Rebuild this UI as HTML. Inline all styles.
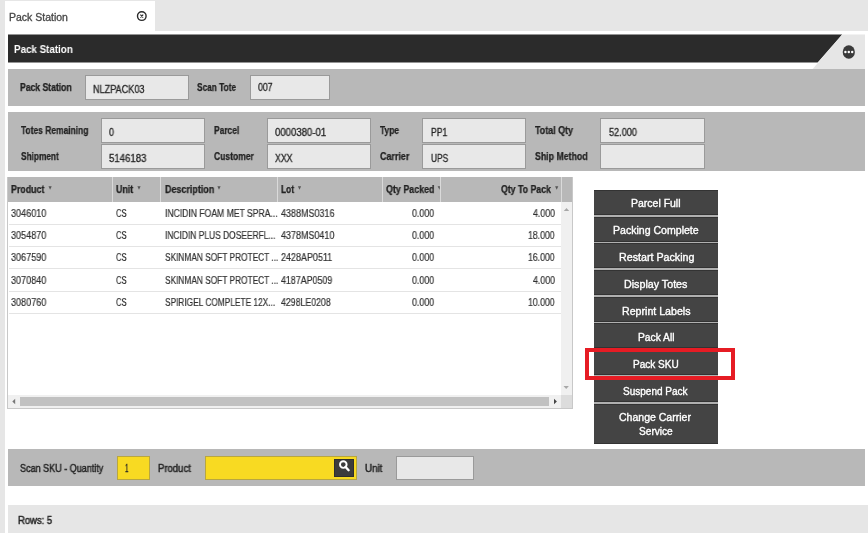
<!DOCTYPE html>
<html><head><meta charset="utf-8">
<style>
*{box-sizing:border-box;margin:0;padding:0}
html,body{width:868px;height:533px;overflow:hidden;background:#e6e6e6;font-family:"Liberation Sans",sans-serif;position:relative}
.a{position:absolute}
.t{position:absolute;white-space:nowrap;line-height:1;transform-origin:0 0;color:#333;will-change:transform}
.in{position:absolute;background:#e8e8e8;border:1px solid #9a9a9a}
.btn{position:absolute;left:594px;width:124px;height:25px;background:#444;border-top:1px solid #333;border-bottom:1px solid #333}
.sep{position:absolute;top:177px;height:25px;width:1px;background:#dadada}
.rs{position:absolute;left:9px;width:552px;height:1px;background:#e4e4e4}
</style></head><body>
<!-- tab -->
<div class="a" style="left:5px;top:1px;width:150px;height:30px;background:#fff"></div>
<svg class="a" style="left:135px;top:10px" width="14" height="14" viewBox="0 0 14 14"><circle cx="6.8" cy="6.1" r="4.3" fill="none" stroke="#2a2a2a" stroke-width="1.4"/><path d="M5.4 4.7L8.2 7.5M8.2 4.7L5.4 7.5" stroke="#2a2a2a" stroke-width="1.2"/></svg>

<!-- white container -->
<div class="a" style="left:5px;top:31px;width:863px;height:502px;background:#fff"></div>
<!-- header bar -->
<svg class="a" style="left:0;top:0" width="868" height="533">
<polygon points="8,34.5 842.2,34.5 817.6,62.5 8,62.5" fill="#2b2b2b"/>
<polygon points="842.2,34.5 865,34.5 865,69 812.7,69" fill="#e6e6e6"/>
<ellipse cx="848.8" cy="52" rx="6.1" ry="6.7" fill="#3a3a3a"/>
<circle cx="845.4" cy="52" r="1.2" fill="#fff"/><circle cx="848.8" cy="52" r="1.2" fill="#fff"/><circle cx="852.2" cy="52" r="1.2" fill="#fff"/>
</svg>

<!-- panel 1 -->
<div class="a" style="left:8px;top:69px;width:857px;height:37px;background:#b8b8b8"></div>
<div class="in" style="left:85px;top:75px;width:104px;height:24.5px"></div>
<div class="in" style="left:250px;top:75px;width:80px;height:24.5px"></div>

<!-- panel 2 -->
<div class="a" style="left:8px;top:112px;width:857px;height:59px;background:#b8b8b8"></div>
<div class="in" style="left:101px;top:118px;width:104px;height:25px"></div>
<div class="in" style="left:101px;top:144px;width:104px;height:25px"></div>
<div class="in" style="left:267px;top:118px;width:104px;height:25px"></div>
<div class="in" style="left:267px;top:144px;width:104px;height:25px"></div>
<div class="in" style="left:422px;top:118px;width:104px;height:25px"></div>
<div class="in" style="left:422px;top:144px;width:104px;height:25px"></div>
<div class="in" style="left:600px;top:118px;width:105px;height:25px"></div>
<div class="in" style="left:600px;top:144px;width:105px;height:25px"></div>

<!-- table -->
<div class="a" style="left:7px;top:177px;width:566px;height:232px;border:1px solid #c8c8c8;border-top:none;background:#fff"></div>
<div class="a" style="left:8px;top:177px;width:564px;height:25px;background:#b8b8b8"></div>
<div class="sep" style="left:112px"></div>
<div class="sep" style="left:160px"></div>
<div class="sep" style="left:277px"></div>
<div class="sep" style="left:382px"></div>
<div class="sep" style="left:440px"></div>
<div class="sep" style="left:561px"></div>
<svg class="a" style="left:0;top:0" width="868" height="533"><polygon points="48.5,186.3 51.7,186.3 50.1,189.8" fill="#555"/><polygon points="137.4,186.3 140.6,186.3 139,189.8" fill="#555"/><polygon points="217.4,186.3 220.6,186.3 219,189.8" fill="#555"/><polygon points="297.9,186.3 301.1,186.3 299.5,189.8" fill="#555"/><polygon points="555.1,186.3 558.3000000000001,186.3 556.7,189.8" fill="#555"/><polygon points="437.6,186.3 440,186.3 439.5,189.8" fill="#555"/></svg>
<!-- vscroll -->
<div class="a" style="left:561px;top:202px;width:11px;height:193px;background:#f0f0f0"></div>
<!-- hscroll -->
<div class="a" style="left:8px;top:395px;width:553px;height:13px;background:#f0f0f0"></div>
<div class="a" style="left:20px;top:397px;width:529px;height:9px;background:#c1c1c1"></div>
<div class="a" style="left:561px;top:395px;width:11px;height:13px;background:#dcdcdc"></div>

<svg class="a" style="left:0;top:0" width="868" height="533">
<polygon points="563.8,211 569.2,211 566.5,208" fill="#a8a8a8"/>
<polygon points="563.5,386 568.9,386 566.2,389" fill="#a8a8a8"/>
<polygon points="15.2,398.8 15.2,404.2 12.3,401.5" fill="#777"/>
<polygon points="554,398.8 554,404.2 556.9,401.5" fill="#444"/>
</svg>
<div class="rs" style="top:224px"></div>
<div class="rs" style="top:246px"></div>
<div class="rs" style="top:268px"></div>
<div class="rs" style="top:291px"></div>
<div class="rs" style="top:313px"></div>

<!-- buttons -->
<div class="a" style="left:594px;top:190px;width:124px;height:254px;background:#b0b0b0"></div>
<div class="btn" style="top:190px"></div>
<div class="btn" style="top:217px"></div>
<div class="btn" style="top:243px"></div>
<div class="btn" style="top:270px"></div>
<div class="btn" style="top:297px"></div>
<div class="btn" style="top:323px"></div>
<div class="btn" style="top:350px"></div>
<div class="btn" style="top:377px"></div>
<div class="btn" style="top:404px;height:40px"></div>

<!-- scan panel -->
<div class="a" style="left:8px;top:449px;width:857px;height:37px;background:#b8b8b8"></div>
<div class="a" style="left:117px;top:455.5px;width:33px;height:24.5px;background:#f8da22;border:1px solid #b8a640"></div>
<div class="a" style="left:205px;top:455.5px;width:152px;height:24.5px;background:#f8da22;border:1px solid #b8a640"></div>
<div class="a" style="left:334px;top:459px;width:20px;height:18px;background:#3c3c3c;border:1px solid #2e2e2e"></div>
<svg class="a" style="left:334px;top:459px" width="20" height="18" viewBox="0 0 20 18"><circle cx="9.3" cy="5.6" r="3.3" fill="none" stroke="#fff" stroke-width="1.9"/><path d="M11.6 8L14.6 11.2" stroke="#fff" stroke-width="2.4" stroke-linecap="round"/></svg>
<div class="in" style="left:396px;top:455.5px;width:78px;height:24.5px"></div>

<!-- footer -->
<div class="a" style="left:8px;top:505px;width:860px;height:28px;background:#e6e6e6"></div>
<div class="t" style="left:8.80px;top:13px;font-size:10px;-webkit-text-stroke:0.3px #484848;color:#484848;transform:scaleX(1.0489)">Pack Station</div>
<div class="t" style="left:13.50px;top:45px;font-size:10px;font-weight:bold;color:#fff;transform:scaleX(0.9781)">Pack Station</div>
<div class="t" style="left:20.10px;top:83px;font-size:10px;font-weight:bold;-webkit-text-stroke:0.25px #222;color:#222;transform:scaleX(0.8596)">Pack Station</div>
<div class="t" style="left:93.10px;top:85px;font-size:10px;-webkit-text-stroke:0.3px #262626;color:#262626;transform:scaleX(0.9097)">NLZPACK03</div>
<div class="t" style="left:196.90px;top:83px;font-size:10px;font-weight:bold;-webkit-text-stroke:0.25px #222;color:#222;transform:scaleX(0.8297)">Scan Tote</div>
<div class="t" style="left:257.80px;top:83px;font-size:10px;-webkit-text-stroke:0.3px #262626;color:#262626;transform:scaleX(0.8760)">007</div>
<div class="t" style="left:20.60px;top:126px;font-size:10px;font-weight:bold;-webkit-text-stroke:0.25px #222;color:#222;transform:scaleX(0.8442)">Totes Remaining</div>
<div class="t" style="left:20.60px;top:152px;font-size:10px;font-weight:bold;-webkit-text-stroke:0.25px #222;color:#222;transform:scaleX(0.8285)">Shipment</div>
<div class="t" style="left:109.40px;top:128px;font-size:10px;-webkit-text-stroke:0.3px #262626;color:#262626;transform:scaleX(0.8833)">0</div>
<div class="t" style="left:109.40px;top:154px;font-size:10px;-webkit-text-stroke:0.3px #262626;color:#262626;transform:scaleX(0.9627)">5146183</div>
<div class="t" style="left:213.60px;top:126px;font-size:10px;font-weight:bold;-webkit-text-stroke:0.25px #222;color:#222;transform:scaleX(0.8398)">Parcel</div>
<div class="t" style="left:213.60px;top:152px;font-size:10px;font-weight:bold;-webkit-text-stroke:0.25px #222;color:#222;transform:scaleX(0.8529)">Customer</div>
<div class="t" style="left:275.40px;top:128px;font-size:10px;-webkit-text-stroke:0.3px #262626;color:#262626;transform:scaleX(0.9587)">0000380-01</div>
<div class="t" style="left:275.40px;top:154px;font-size:10px;-webkit-text-stroke:0.3px #262626;color:#262626;transform:scaleX(0.8751)">XXX</div>
<div class="t" style="left:379.80px;top:126px;font-size:10px;font-weight:bold;-webkit-text-stroke:0.25px #222;color:#222;transform:scaleX(0.8422)">Type</div>
<div class="t" style="left:379.80px;top:152px;font-size:10px;font-weight:bold;-webkit-text-stroke:0.25px #222;color:#222;transform:scaleX(0.8934)">Carrier</div>
<div class="t" style="left:430.60px;top:128px;font-size:10px;-webkit-text-stroke:0.3px #262626;color:#262626;transform:scaleX(0.8635)">PP1</div>
<div class="t" style="left:430.60px;top:154px;font-size:10px;-webkit-text-stroke:0.3px #262626;color:#262626;transform:scaleX(0.8281)">UPS</div>
<div class="t" style="left:534.80px;top:126px;font-size:10px;font-weight:bold;-webkit-text-stroke:0.25px #222;color:#222;transform:scaleX(0.8924)">Total Qty</div>
<div class="t" style="left:534.80px;top:152px;font-size:10px;font-weight:bold;-webkit-text-stroke:0.25px #222;color:#222;transform:scaleX(0.8767)">Ship Method</div>
<div class="t" style="left:609.40px;top:128px;font-size:10px;-webkit-text-stroke:0.3px #262626;color:#262626;transform:scaleX(0.9122)">52.000</div>
<div class="t" style="left:11.20px;top:185px;font-size:10px;font-weight:bold;-webkit-text-stroke:0.25px #222;color:#222;transform:scaleX(0.8817)">Product</div>
<div class="t" style="left:115.70px;top:185px;font-size:10px;font-weight:bold;-webkit-text-stroke:0.25px #222;color:#222;transform:scaleX(0.8852)">Unit</div>
<div class="t" style="left:164.50px;top:185px;font-size:10px;font-weight:bold;-webkit-text-stroke:0.25px #222;color:#222;transform:scaleX(0.8943)">Description</div>
<div class="t" style="left:281.10px;top:185px;font-size:10px;font-weight:bold;-webkit-text-stroke:0.25px #222;color:#222;transform:scaleX(0.8386)">Lot</div>
<div class="t" style="left:385.60px;top:185px;font-size:10px;font-weight:bold;-webkit-text-stroke:0.25px #222;color:#222;transform:scaleX(0.8903)">Qty Packed</div>
<div class="t" style="left:501.00px;top:185px;font-size:10px;font-weight:bold;-webkit-text-stroke:0.25px #222;color:#222;transform:scaleX(0.8749)">Qty To Pack</div>
<div class="t" style="left:11.10px;top:209px;font-size:10px;-webkit-text-stroke:0.2px #303030;color:#303030;transform:scaleX(0.9093)">3046010</div>
<div class="t" style="left:115.70px;top:209px;font-size:10px;-webkit-text-stroke:0.2px #303030;color:#303030;transform:scaleX(0.7594)">CS</div>
<div class="t" style="left:164.50px;top:209px;font-size:10px;-webkit-text-stroke:0.2px #303030;color:#303030;transform:scaleX(0.8593)">INCIDIN FOAM MET SPRA...</div>
<div class="t" style="left:281.10px;top:209px;font-size:10px;-webkit-text-stroke:0.2px #303030;color:#303030;transform:scaleX(0.8994)">4388MS0316</div>
<div class="t" style="left:411.50px;top:209px;font-size:10px;-webkit-text-stroke:0.2px #303030;color:#303030;transform:scaleX(0.8836)">0.000</div>
<div class="t" style="left:532.50px;top:209px;font-size:10px;-webkit-text-stroke:0.2px #303030;color:#303030;transform:scaleX(0.8797)">4.000</div>
<div class="t" style="left:11.10px;top:231px;font-size:10px;-webkit-text-stroke:0.2px #303030;color:#303030;transform:scaleX(0.9093)">3054870</div>
<div class="t" style="left:115.70px;top:231px;font-size:10px;-webkit-text-stroke:0.2px #303030;color:#303030;transform:scaleX(0.7594)">CS</div>
<div class="t" style="left:164.50px;top:231px;font-size:10px;-webkit-text-stroke:0.2px #303030;color:#303030;transform:scaleX(0.8423)">INCIDIN PLUS DOSEERFL...</div>
<div class="t" style="left:281.10px;top:231px;font-size:10px;-webkit-text-stroke:0.2px #303030;color:#303030;transform:scaleX(0.8977)">4378MS0410</div>
<div class="t" style="left:411.50px;top:231px;font-size:10px;-webkit-text-stroke:0.2px #303030;color:#303030;transform:scaleX(0.8836)">0.000</div>
<div class="t" style="left:527.90px;top:231px;font-size:10px;-webkit-text-stroke:0.2px #303030;color:#303030;transform:scaleX(0.8703)">18.000</div>
<div class="t" style="left:11.10px;top:253px;font-size:10px;-webkit-text-stroke:0.2px #303030;color:#303030;transform:scaleX(0.9093)">3067590</div>
<div class="t" style="left:115.70px;top:253px;font-size:10px;-webkit-text-stroke:0.2px #303030;color:#303030;transform:scaleX(0.7594)">CS</div>
<div class="t" style="left:164.50px;top:253px;font-size:10px;-webkit-text-stroke:0.2px #303030;color:#303030;transform:scaleX(0.8315)">SKINMAN SOFT PROTECT ...</div>
<div class="t" style="left:281.10px;top:253px;font-size:10px;-webkit-text-stroke:0.2px #303030;color:#303030;transform:scaleX(0.8969)">2428AP0511</div>
<div class="t" style="left:411.50px;top:253px;font-size:10px;-webkit-text-stroke:0.2px #303030;color:#303030;transform:scaleX(0.8836)">0.000</div>
<div class="t" style="left:527.90px;top:253px;font-size:10px;-webkit-text-stroke:0.2px #303030;color:#303030;transform:scaleX(0.8703)">16.000</div>
<div class="t" style="left:11.10px;top:276px;font-size:10px;-webkit-text-stroke:0.2px #303030;color:#303030;transform:scaleX(0.9093)">3070840</div>
<div class="t" style="left:115.70px;top:276px;font-size:10px;-webkit-text-stroke:0.2px #303030;color:#303030;transform:scaleX(0.7594)">CS</div>
<div class="t" style="left:164.50px;top:276px;font-size:10px;-webkit-text-stroke:0.2px #303030;color:#303030;transform:scaleX(0.8315)">SKINMAN SOFT PROTECT ...</div>
<div class="t" style="left:281.10px;top:276px;font-size:10px;-webkit-text-stroke:0.2px #303030;color:#303030;transform:scaleX(0.8855)">4187AP0509</div>
<div class="t" style="left:411.50px;top:276px;font-size:10px;-webkit-text-stroke:0.2px #303030;color:#303030;transform:scaleX(0.8836)">0.000</div>
<div class="t" style="left:532.50px;top:276px;font-size:10px;-webkit-text-stroke:0.2px #303030;color:#303030;transform:scaleX(0.8797)">4.000</div>
<div class="t" style="left:11.10px;top:298px;font-size:10px;-webkit-text-stroke:0.2px #303030;color:#303030;transform:scaleX(0.9093)">3080760</div>
<div class="t" style="left:115.70px;top:298px;font-size:10px;-webkit-text-stroke:0.2px #303030;color:#303030;transform:scaleX(0.7594)">CS</div>
<div class="t" style="left:164.50px;top:298px;font-size:10px;-webkit-text-stroke:0.2px #303030;color:#303030;transform:scaleX(0.8315)">SPIRIGEL COMPLETE 12X...</div>
<div class="t" style="left:281.10px;top:298px;font-size:10px;-webkit-text-stroke:0.2px #303030;color:#303030;transform:scaleX(0.8765)">4298LE0208</div>
<div class="t" style="left:411.50px;top:298px;font-size:10px;-webkit-text-stroke:0.2px #303030;color:#303030;transform:scaleX(0.8836)">0.000</div>
<div class="t" style="left:527.90px;top:298px;font-size:10px;-webkit-text-stroke:0.2px #303030;color:#303030;transform:scaleX(0.8703)">10.000</div>
<div class="t" style="left:631.20px;top:199px;font-size:10px;-webkit-text-stroke:0.35px #fff;color:#fff;transform:scaleX(1.0486)">Parcel Full</div>
<div class="t" style="left:612.80px;top:226px;font-size:10px;-webkit-text-stroke:0.35px #fff;color:#fff;transform:scaleX(1.0553)">Packing Complete</div>
<div class="t" style="left:618.80px;top:253px;font-size:10px;-webkit-text-stroke:0.35px #fff;color:#fff;transform:scaleX(1.0682)">Restart Packing</div>
<div class="t" style="left:624.40px;top:280px;font-size:10px;-webkit-text-stroke:0.35px #fff;color:#fff;transform:scaleX(1.0695)">Display Totes</div>
<div class="t" style="left:621.70px;top:307px;font-size:10px;-webkit-text-stroke:0.35px #fff;color:#fff;transform:scaleX(1.0623)">Reprint Labels</div>
<div class="t" style="left:637.70px;top:333px;font-size:10px;-webkit-text-stroke:0.35px #fff;color:#fff;transform:scaleX(1.0250)">Pack All</div>
<div class="t" style="left:633.00px;top:360px;font-size:10px;-webkit-text-stroke:0.35px #fff;color:#fff;transform:scaleX(1.0033)">Pack SKU</div>
<div class="t" style="left:623.00px;top:387px;font-size:10px;-webkit-text-stroke:0.35px #fff;color:#fff;transform:scaleX(1.0017)">Suspend Pack</div>
<div class="t" style="left:619.40px;top:413px;font-size:10px;-webkit-text-stroke:0.35px #fff;color:#fff;transform:scaleX(1.0517)">Change Carrier</div>
<div class="t" style="left:638.70px;top:427px;font-size:10px;-webkit-text-stroke:0.35px #fff;color:#fff;transform:scaleX(1.0123)">Service</div>
<div class="t" style="left:20.00px;top:464px;font-size:10px;-webkit-text-stroke:0.45px #262626;color:#262626;transform:scaleX(0.9029)">Scan SKU - Quantity</div>
<div class="t" style="left:125.40px;top:464px;font-size:10px;-webkit-text-stroke:0.3px #262626;color:#262626;transform:scaleX(0.6333)">1</div>
<div class="t" style="left:157.90px;top:464px;font-size:10px;-webkit-text-stroke:0.45px #262626;color:#262626;transform:scaleX(0.9514)">Product</div>
<div class="t" style="left:365.00px;top:464px;font-size:10px;-webkit-text-stroke:0.45px #262626;color:#262626;transform:scaleX(0.9720)">Unit</div>
<div class="t" style="left:18.30px;top:516px;font-size:10px;-webkit-text-stroke:0.45px #262626;color:#262626;transform:scaleX(0.9464)">Rows: 5</div>
<div class="a" style="left:585px;top:348px;width:150px;height:32px;border:4px solid #e61c24"></div>
</body></html>
